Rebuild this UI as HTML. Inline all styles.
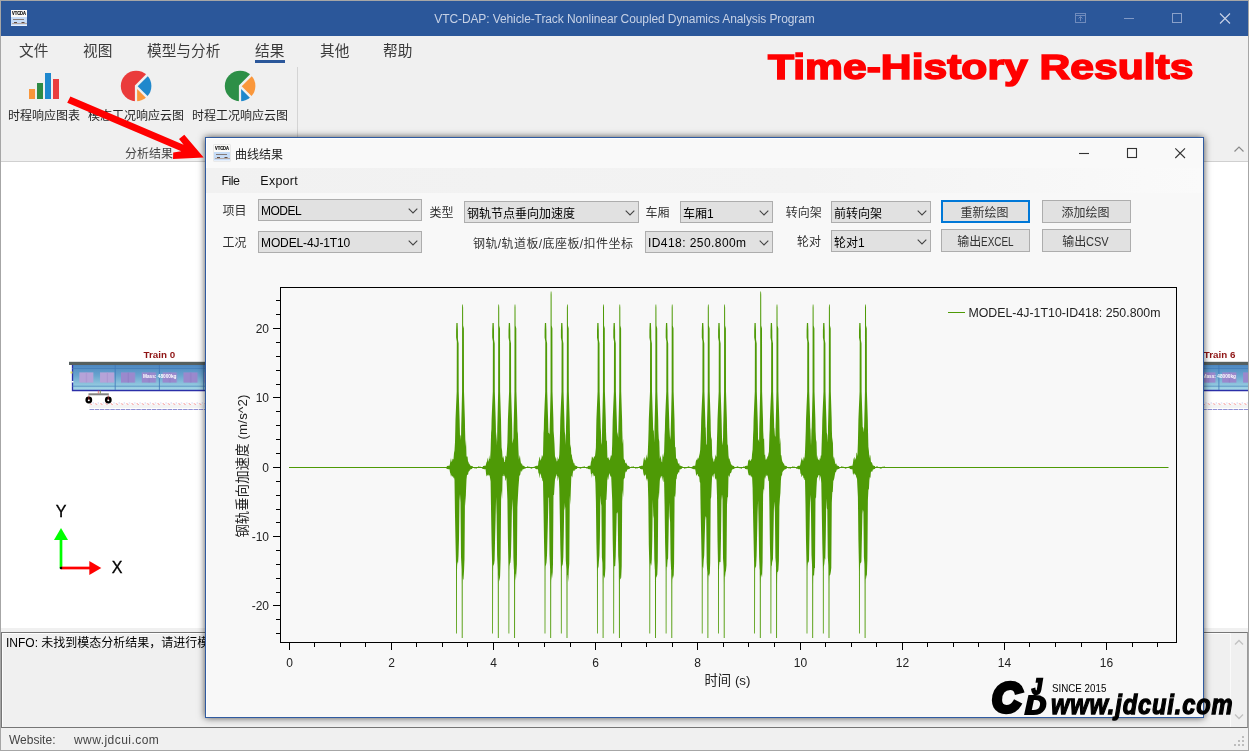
<!DOCTYPE html>
<html lang="zh-CN">
<head>
<meta charset="utf-8">
<title>VTC-DAP: Vehicle-Track Nonlinear Coupled Dynamics Analysis Program</title>
<style>
*{box-sizing:border-box;margin:0;padding:0}
html,body{width:1249px;height:751px;overflow:hidden;background:#f0f0f0}
body{font-family:"Liberation Sans","Noto Sans CJK SC",sans-serif;font-size:12px;color:#222;position:relative}
.abs{position:absolute}
#win{will-change:transform;position:absolute;left:0;top:0;width:1249px;height:751px;border:1px solid #a6a6a6;background:#f0f0f0;overflow:hidden}
#titlebar{position:absolute;left:0;top:0;width:1247px;height:35px;background:#2b579a}
#titletext{position:absolute;left:0;width:1247px;top:10px;text-align:center;color:#c6d1e5;font-size:12px;line-height:16px;letter-spacing:-.1px}
.appicon{position:absolute;width:16px;height:16px;background:#c6dcf7;overflow:hidden}
.appicon .t{position:absolute;left:0;top:0;width:16px;height:7px;background:#fbfaf8}
.appicon .b{position:absolute;left:0;top:14.500px;width:16px;height:1.500px;background:#e6effb}
.appicon span{position:absolute;left:0.900px;top:1.400px;font-size:4.500px;line-height:5px;font-weight:bold;color:#000;white-space:nowrap;transform:scaleX(.9);transform-origin:0 0;-webkit-text-stroke:.15px #000}
.appicon i{position:absolute;left:2px;top:9px;width:11px;height:1px;background:#857b78}
.appicon b{position:absolute;left:2.500px;top:12px;width:3px;height:1.200px;background:#5e4e48;box-shadow:7.500px 0 0 #5e4e48}
.appicon u{position:absolute;left:1px;top:13.200px;width:14.500px;height:.8px;background:#b3a59f}
#menubar{position:absolute;left:0;top:35px;width:1247px;height:30px}
#menubar span{position:absolute;top:5px;font-size:14.67px;line-height:20px;color:#3b3b3b;white-space:nowrap}
#ribbon{position:absolute;left:0;top:65px;width:1247px;height:96px;border-bottom:1px solid #d0d0d0}
.rbtn{position:absolute;top:0;height:62px;text-align:center;font-size:12px;color:#262626;white-space:nowrap}
.rbtn .lbl{position:absolute;left:0;right:0;top:42px;line-height:16px}
#canvas{position:absolute;left:0px;top:161px;width:1247px;height:466px;background:#fff}
#log{position:absolute;left:0px;top:631px;width:1247px;height:96px;border:1px solid #767676;border-right-color:#9a9a9a;background:#f0f0f0;box-shadow:inset 1px 1px 0 #fdfdfd}
#status{position:absolute;left:0;top:727px;width:1247px;height:22px;color:#444;font-size:12px}
#dlg{position:absolute;left:204px;top:136px;width:999px;height:581px;border:1px solid #2f5aa0;background:#f8f8f8;box-shadow:0 0 7px 0 rgba(0,0,0,.68)}
.combo{position:absolute;height:22px;border:1px solid #adadad;background:#e1e1e1;color:#000;font-size:12px;line-height:20px;padding-left:2px;white-space:nowrap}
.combo svg{position:absolute;right:3px;top:8px}
.lab{position:absolute;font-size:12px;line-height:16px;color:#333;white-space:nowrap}
.btn{position:absolute;height:22px;border:1px solid #adadad;background:#e1e1e1;color:#333;font-size:12px;line-height:20px;text-align:center;white-space:nowrap}
.btn.def{border:2px solid #0078d7;line-height:19px}
svg text{font-family:"Liberation Sans","Noto Sans CJK SC",sans-serif}
</style>
</head>
<body>
<div id="win">
  <div id="titlebar">
    <div class="appicon" style="left:10px;top:9px"><div class="t"></div><div class="b"></div><span>VTCDA</span><i></i><b></b><u></u></div>
    <div id="titletext">VTC-DAP: Vehicle-Track Nonlinear Coupled Dynamics Analysis Program</div>
    <svg class="abs" style="left:1060px;top:0" width="187" height="35" viewBox="0 0 187 35" fill="none">
      <g stroke="#6f8bbd" stroke-width="1"><rect x="14.5" y="12.5" width="10" height="9"/><path d="M14.5 14.5h10M19.500 20v-4M17.5 17.5l2-2 2 2"/></g>
      <path d="M63 17.500h10" stroke="#8199c5"/>
      <rect x="111.500" y="12.500" width="9" height="9" stroke="#8aa1ca"/>
      <path d="M159 12.500l10 10M169 12.500l-10 10" stroke="#c9d3e7" stroke-width="1.1"/>
    </svg>
  </div>
  <div id="menubar">
    <span style="left:18px">文件</span><span style="left:82px">视图</span><span style="left:146px">模型与分析</span><span style="left:254px">结果</span><span style="left:319px">其他</span><span style="left:382px">帮助</span>
    <div class="abs" style="left:254px;top:24px;width:30px;height:3px;background:#2b579a"></div>
  </div>
  <div id="ribbon">
    <div class="rbtn" style="left:3px;width:80px">
      <svg class="abs" style="left:24px;top:6px" width="32" height="28" viewBox="0 0 32 28"><rect x="1" y="17" width="6" height="10" fill="#f9963b"/><rect x="9" y="11" width="6" height="16" fill="#2e8b45"/><rect x="17" y="1" width="6" height="26" fill="#1e88ce"/><rect x="25" y="7" width="6" height="20" fill="#ea3e3e"/></svg>
      <div class="lbl">时程响应图表</div>
    </div>
    <div class="rbtn" style="left:87px;width:96px">
      <svg class="abs" style="left:32px;top:4px" width="32" height="32" viewBox="120 70 32 32"><defs><clipPath id="pc1"><circle cx="136.100" cy="86" r="15.300"/></clipPath></defs><g clip-path="url(#pc1)"><path d="M134.900 85.400L164.900 55.400H100V120H134.900Z" fill="#ea3b3b"/><path d="M137.700 86.300L167.700 56.300V116.300Z" fill="#1f88cc"/><path d="M137.100 89V120H168.100Z" fill="#fa973b"/></g></svg>
      <div class="lbl">模态工况响应云图</div>
    </div>
    <div class="rbtn" style="left:191px;width:96px">
      <svg class="abs" style="left:32px;top:4px" width="32" height="32" viewBox="120 70 32 32"><defs><clipPath id="pc2"><circle cx="136.100" cy="86" r="15.300"/></clipPath></defs><g clip-path="url(#pc2)"><path d="M134.900 85.400L164.900 55.400H100V120H134.900Z" fill="#2d8f47"/><path d="M137.700 86.300L167.700 56.300V116.300Z" fill="#fa973b"/><path d="M137.100 89V120H168.100Z" fill="#1f88cc"/></g></svg>
      <div class="lbl">时程工况响应云图</div>
    </div>
    <div class="abs" style="left:296px;top:1px;width:1px;height:93px;background:#d4d4d4"></div>
    <div class="abs" style="left:124px;top:80px;font-size:12px;line-height:16px;color:#444">分析结果</div>
    <svg class="abs" style="left:1232px;top:79px" width="12" height="8" viewBox="0 0 12 8"><path d="M1.500 6.500l4.500-4.500 4.500 4.500" stroke="#8a8a8a" fill="none" stroke-width="1.200"/></svg>
  </div>
  <div id="bigtitle" class="abs" style="left:767px;top:44px;font-size:34.500px;line-height:44px;font-weight:bold;color:#ff0000;white-space:nowrap;transform-origin:0 0;transform:scaleX(1.235);-webkit-text-stroke:1.500px #ff0000">Time-History Results</div>

  <div id="canvas">
    <svg class="abs" style="left:0;top:0" width="1247" height="466" viewBox="1 162 1247 466">
<defs><linearGradient id="tb" x1="0" y1="0" x2="0" y2="1"><stop offset="0" stop-color="#4a84bf"/><stop offset=".45" stop-color="#6aa6cf"/><stop offset="1" stop-color="#a9dbe8"/></linearGradient><pattern id="trk" x="89.500" y="401" width="5.200" height="6" patternUnits="userSpaceOnUse"><path d="M0.500 2.400l1.800 1.200" stroke="#f04a4a" stroke-width="0.800" opacity=".8"/><rect x="3.200" y="1.600" width="0.900" height="0.800" fill="#7a7ad8" opacity=".7"/></pattern><pattern id="win1" x="79.200" y="372" width="20.850" height="11" patternUnits="userSpaceOnUse"><rect x="0" y="0.400" width="14.200" height="10.200" fill="#b5a3d8"/><rect x="6.800" y="0.400" width="0.800" height="10.200" fill="#a792cf"/></pattern><pattern id="win3" x="120.900" y="372" width="20.850" height="11" patternUnits="userSpaceOnUse"><rect x="0" y="0.400" width="14.200" height="10.200" fill="#9a89cd"/><rect x="6.800" y="0.400" width="0.800" height="10.200" fill="#8c7bc3"/></pattern><pattern id="win2" x="1201.300" y="372" width="20.900" height="11" patternUnits="userSpaceOnUse"><rect x="0" y="0.400" width="14.200" height="10.200" fill="#9b88cc"/><rect x="6.800" y="0.400" width="0.800" height="10.200" fill="#8d7ac2"/></pattern></defs>
<rect x="89" y="404.500" width="1159" height="3.500" fill="#f3f3f3"/>
<rect x="89.500" y="401" width="1159" height="6" fill="url(#trk)"/>
<path d="M89.500 409.500H1248" stroke="#6a6ac4" stroke-width="1" stroke-dasharray="4.500 0.700" opacity=".75"/>
<rect x="72" y="364" width="1176" height="26.500" fill="url(#tb)"/>
<path d="M72.500 364V390.500H1248" fill="none" stroke="#2b2fa8" stroke-width="1.300"/>
<path d="M72 368.500H1248M72 386.200H1248" stroke="#3f78b8" stroke-width="0.800" opacity=".8"/>
<path d="M115.200 365V390M159.400 365V390M203.600 365V390M1218.900 365V390" stroke="#3f78b8" stroke-width="0.900" opacity=".9"/>
<rect x="79.200" y="372" width="36" height="11" fill="url(#win1)"/>
<rect x="120.900" y="372" width="90" height="11" fill="url(#win3)"/>
<rect x="1201.300" y="372" width="47" height="11" fill="url(#win2)"/>
<rect x="69" y="361.800" width="1179" height="3.200" fill="#56605f"/>
<rect x="70.500" y="371.500" width="2" height="2" fill="#e8e060"/><rect x="71.500" y="381" width="2" height="1.500" fill="#fff"/>
<rect x="88.500" y="393.300" width="20.300" height="2" fill="#808080"/>
<path d="M98.300 390.500v3M100.300 390.500v3" stroke="#e05050" stroke-width="0.700"/><path d="M100.300 390.500v3" stroke="#50b050" stroke-width="0.700"/>
<circle cx="88.800" cy="400" r="3.400" fill="#000"/><circle cx="108.300" cy="400" r="3.400" fill="#000"/><circle cx="88.800" cy="400.300" r="1" fill="#fff"/><circle cx="108.300" cy="400.300" r="1" fill="#fff"/>
<path d="M88.800 395.500v4.500M108.300 395.500v4.500" stroke="#d03030" stroke-width="0.600"/>
<text x="143.500" y="358" font-size="9.800" font-weight="bold" fill="#8f1414">Train 0</text>
<text x="1203.800" y="358" font-size="9.800" font-weight="bold" fill="#8f1414">Train 6</text>
<text x="143" y="377.900" font-size="5.600" font-weight="bold" fill="#fff" textLength="33.500" lengthAdjust="spacingAndGlyphs">Mass: 48000kg</text>
<text x="1202.500" y="377.900" font-size="5.600" font-weight="bold" fill="#fff" textLength="33.500" lengthAdjust="spacingAndGlyphs">Mass: 48000kg</text>
<path d="M61 568V539" stroke="#00ff00" stroke-width="2.700"/><path d="M61 528L54 540H68Z" fill="#00ff00"/>
<path d="M61 568H90" stroke="#ff0000" stroke-width="2.700"/><path d="M101.300 568L89.300 561V575Z" fill="#ff0000"/>
<circle cx="61" cy="568" r="1.300" fill="#000"/>
<text x="61.200" y="516.600" font-size="16" text-anchor="middle" fill="#000" stroke="#000" stroke-width="0.350">Y</text>
<text x="117.200" y="572.800" font-size="16" text-anchor="middle" fill="#000" stroke="#000" stroke-width="0.350">X</text>
</svg>
  </div>
  <div id="log">
    <div class="abs" style="left:4px;top:2px;font-size:12px;line-height:16px;color:#000;white-space:nowrap">INFO: 未找到模态分析结果，请进行模态分析</div>
    <div class="abs" style="right:0;top:0;width:17px;height:94px;background:#f0f0f0;border-left:1px solid #fafafa">
      <svg class="abs" style="left:3px;top:6px" width="10" height="7" viewBox="0 0 10 7"><path d="M1 5.500l4-4 4 4" stroke="#c2c2c2" fill="none" stroke-width="1.300"/></svg>
      <svg class="abs" style="left:3px;top:80px" width="10" height="7" viewBox="0 0 10 7"><path d="M1 1.500l4 4 4-4" stroke="#c2c2c2" fill="none" stroke-width="1.300"/></svg>
    </div>
  </div>
  <div id="status">
    <span class="abs" style="left:8px;top:4px;line-height:16px">Website:</span>
    <span class="abs" style="left:73px;top:4px;line-height:16px;letter-spacing:.45px">www.jdcui.com</span>
    <svg class="abs" style="left:1231px;top:7px" width="13" height="13" viewBox="0 0 13 13" fill="#bdbdbd"><rect x="10" y="1" width="2" height="2"/><rect x="6" y="5" width="2" height="2"/><rect x="10" y="5" width="2" height="2"/><rect x="2" y="9" width="2" height="2"/><rect x="6" y="9" width="2" height="2"/><rect x="10" y="9" width="2" height="2"/></svg>
  </div>

  <!-- red annotation arrow -->
  <svg class="abs" style="left:0;top:0;z-index:3" width="300" height="200" viewBox="1 1 300 200"><path d="M70.400 96.400L183.600 144.800L179 139L184.300 134.800L203.700 157.600L173 159L173.200 152.600L181.300 151.300L67.200 102.800Z" fill="#ff0000"/></svg>

  <div id="dlg">
    <div class="abs" style="left:0;top:0;width:997px;height:30px;background:#f9f9f9;border-top:1px solid #fff;border-left:1px solid #fff"></div>
<div class="abs" style="left:0;top:30px;width:1px;height:549px;background:#fdfdfd"></div>
<div class="abs" style="left:0;top:30px;width:997px;height:25px;background:linear-gradient(90deg,#f1f1f1 0,#f3f3f3 60%,#fafafa 100%)"></div>
<div class="appicon" style="left:8px;top:7px;box-shadow:0 0 0 .5px #d9d9d9"><div class="t"></div><div class="b"></div><span>VTCDA</span><i></i><b></b><u></u></div>
<div class="abs" style="left:29px;top:8.500px;font-size:12px;line-height:16px;color:#222">曲线结果</div>
<svg class="abs" style="left:860px;top:0" width="137" height="30" viewBox="1066 138 137 30" fill="none" stroke="#333" stroke-width="1.100"><path d="M1079 153.500h10"/><rect x="1127.500" y="148.500" width="9" height="9"/><path d="M1175.300 148.300l9.700 9.700M1185 148.300l-9.700 9.700"/></svg>
<div class="abs" style="left:15.500px;top:35px;font-size:12.500px;line-height:16px;color:#111;letter-spacing:-.6px">File</div>
<div class="abs" style="left:54.300px;top:35px;font-size:12.500px;line-height:16px;color:#111;letter-spacing:.25px">Export</div>
<div class="lab" style="left:16.5px;top:64.8px">项目</div>
<div class="lab" style="left:16.5px;top:97.0px">工况</div>
<div class="lab" style="left:223.5px;top:66.8px">类型</div>
<div class="lab" style="left:439.5px;top:67.0px">车厢</div>
<div class="lab" style="left:579.8px;top:67.0px">转向架</div>
<div class="lab" style="left:591.0px;top:96.0px">轮对</div>
<div class="lab" style="left:267px;top:98px;letter-spacing:.42px">钢轨/轨道板/底座板/扣件坐标</div>
<div class="combo" style="left:52px;top:61px;width:164px;height:22px"><span style="position:relative;top:0.5px;letter-spacing:-0.5px">MODEL</span><svg width="10" height="6" viewBox="0 0 10 6"><path d="M0.700 0.700l4.300 4.300 4.300-4.300" fill="none" stroke="#444" stroke-width="1.100"/></svg></div>
<div class="combo" style="left:52px;top:93px;width:164px;height:22px"><span style="position:relative;top:0.5px;letter-spacing:-0.12px">MODEL-4J-1T10</span><svg width="10" height="6" viewBox="0 0 10 6"><path d="M0.700 0.700l4.300 4.300 4.300-4.300" fill="none" stroke="#444" stroke-width="1.100"/></svg></div>
<div class="combo" style="left:258px;top:63px;width:175px;height:22px"><span style="position:relative;top:1.5px;letter-spacing:0px">钢轨节点垂向加速度</span><svg width="10" height="6" viewBox="0 0 10 6"><path d="M0.700 0.700l4.300 4.300 4.300-4.300" fill="none" stroke="#444" stroke-width="1.100"/></svg></div>
<div class="combo" style="left:474px;top:63px;width:93px;height:22px"><span style="position:relative;top:1.5px;letter-spacing:0px">车厢1</span><svg width="10" height="6" viewBox="0 0 10 6"><path d="M0.700 0.700l4.300 4.300 4.300-4.300" fill="none" stroke="#444" stroke-width="1.100"/></svg></div>
<div class="combo" style="left:439px;top:93px;width:128px;height:22px"><span style="position:relative;top:0.5px;letter-spacing:0.43px">ID418: 250.800m</span><svg width="10" height="6" viewBox="0 0 10 6"><path d="M0.700 0.700l4.300 4.300 4.300-4.300" fill="none" stroke="#444" stroke-width="1.100"/></svg></div>
<div class="combo" style="left:625px;top:63px;width:100px;height:22px"><span style="position:relative;top:1.5px;letter-spacing:0px">前转向架</span><svg width="10" height="6" viewBox="0 0 10 6"><path d="M0.700 0.700l4.300 4.300 4.300-4.300" fill="none" stroke="#444" stroke-width="1.100"/></svg></div>
<div class="combo" style="left:625px;top:92px;width:100px;height:22px"><span style="position:relative;top:1.5px;letter-spacing:0px">轮对1</span><svg width="10" height="6" viewBox="0 0 10 6"><path d="M0.700 0.700l4.300 4.300 4.300-4.300" fill="none" stroke="#444" stroke-width="1.100"/></svg></div>
<div class="btn def" style="left:735px;top:62px;width:89px;height:23px"><span style="position:relative;top:2px"><span style="position:relative;left:-1px">重新绘图</span></span></div>
<div class="btn " style="left:735px;top:91px;width:89px;height:23px"><span style="position:relative;top:2px">输出<span style="display:inline-block;transform:scaleX(.83);transform-origin:0 50%;margin-right:-6.700px">EXCEL</span></span></div>
<div class="btn " style="left:836px;top:62px;width:89px;height:23px"><span style="position:relative;top:2px"><span style="position:relative;left:-1px">添加绘图</span></span></div>
<div class="btn " style="left:836px;top:91px;width:89px;height:23px"><span style="position:relative;top:2px"><span style="position:relative;left:-1px">输出</span><span style="display:inline-block;transform:scaleX(.92);transform-origin:0 50%;margin-right:-2px;left:-1px;position:relative">CSV</span></span></div>
<svg class="abs" style="left:0;top:0" width="997" height="579" viewBox="206 138 997 579">
<path d="M446.5 467.2 447 465.9 447.5 465.9 448 465.8 448.5 465.8 449 465.7 449.5 465.7 450 463.5 450.5 460.5 451 458.1 451.5 461.7 452 461.5 452.5 458.4 453 459.5 453.5 458.9 454 452.9 454.5 450.6 455 441.9 455.3 429.2 455.5 419.5 456 407.5 456.7 391.5 456.8 341.5 456.1 337.5 456.1 330.5 456.4 323 457.6 323 457.9 330.5 457.95 339.5 458.6 343.5 458.7 391.5 459.2 407.5 459.6 419.5 459.8 427.7 460 436.2 460.5 434.5 461 440.3 461.2 427 461.4 419.5 461.7 407.5 462.05 391.5 462.1 307.5 462.3 304.5 462.9 304.5 463.1 307.5 463.15 325.5 463.9 328.5 464 391.5 464.5 407.5 464.9 419.5 465.1 431.1 465.5 446.7 466 439.2 466.5 455.7 467 457.2 467.5 455.9 468 461.2 468.5 461.9 469 464.1 469.5 463.4 470 465.5 470.5 465.6 471 465.8 471.5 465.9 472 466 472.5 467.2 473 467.5 473.5 467.5 474 467.5 474.5 467.5 475 467.5 475.5 467.5 476 467.5 476.5 467.5 477 467.5 477.5 467.5 478 467.5 478 467.5 477.5 467.5 477 467.5 476.5 467.5 476 467.5 475.5 467.5 475 467.5 474.5 467.5 474 467.5 473.5 467.5 473 467.5 472.5 467.8 472 469 471.5 469.1 471 469.2 470.5 469.4 470 469.5 469.5 471 469 471.2 468.5 472 468 475 467.5 474.4 467 474.9 466.5 479.5 466 490.9 465.5 505.9 465 495.6 464.5 558.9 464 571.5 463.5 579.3 463 579.8 462.8 574.8 462.7 584.5 462.65 638 461.75 638 461.7 584.5 461.6 569.2 461.5 567.1 461 557.1 460.5 502.8 460 494.1 459.5 500.8 459 538.7 458.5 555.8 458 564.1 457.5 561.2 457.1 566.3 457 571.5 456.9 633.5 456.1 633.5 456.05 571.5 456 564.5 455.5 541.2 455 515.4 454.5 479.9 454 477.3 453.5 478.4 453 475.9 452.5 476.4 452 476.7 451.5 474.4 451 476.8 450.5 473.8 450 472.6 449.5 469.3 449 469.3 448.5 469.2 448 469.2 447.5 469.1 447 469.1 446.5 467.8ZM482.6 467.2 483.1 465.9 483.6 465.9 484.1 465.8 484.6 465.8 485.1 465.7 485.6 465.7 486.1 463.7 486.6 461.9 487.1 461.3 487.6 457.5 488.1 459.9 488.6 462 489.1 455 489.6 458.5 490.1 459.2 490.6 450.8 491.1 432.8 491.4 429.2 491.6 419.5 492.1 407.5 492.8 391.5 492.9 341.5 492.2 337.5 492.2 330.5 492.5 323 493.7 323 494 330.5 494.05 339.5 494.7 343.5 494.8 391.5 495.3 407.5 495.7 419.5 495.9 427.7 496.1 445.6 496.6 431.8 497.1 441.9 497.3 427 497.5 419.5 497.8 407.5 498.15 391.5 498.2 307.5 498.4 304.5 499 304.5 499.2 307.5 499.25 325.5 500 328.5 500.1 391.5 500.6 407.5 501 419.5 501.2 431.1 501.6 447.5 502.1 450.7 502.6 458.2 503.1 455.9 503.6 457.8 504.1 460 504.6 464 505.1 463.8 505.6 464.1 506.1 465.5 506.6 465.6 507.1 465.8 507.6 465.9 508.1 466 508.6 467.2 509.1 467.5 509.6 467.5 510.1 467.5 510.6 467.5 511.1 467.5 511.6 467.5 512.1 467.5 512.6 467.5 513.1 467.5 513.6 467.5 514.1 467.5 514.1 467.5 513.6 467.5 513.1 467.5 512.6 467.5 512.1 467.5 511.6 467.5 511.1 467.5 510.6 467.5 510.1 467.5 509.6 467.5 509.1 467.5 508.6 467.8 508.1 469 507.6 469.1 507.1 469.2 506.6 469.4 506.1 469.5 505.6 470.6 505.1 472 504.6 472.8 504.1 472 503.6 476.3 503.1 476.1 502.6 475.8 502.1 499 501.6 490.7 501.1 500.1 500.6 559 500.1 575.9 499.6 581.5 499.1 578.5 498.9 574.8 498.8 584.5 498.75 638 497.85 638 497.8 584.5 497.7 569.2 497.6 566.9 497.1 555.3 496.6 514.4 496.1 496.9 495.6 518.8 495.1 537.9 494.6 560.2 494.1 564 493.6 565 493.2 566.3 493.1 571.5 493 633.5 492.2 633.5 492.15 571.5 492.1 564.5 491.6 543.5 491.1 514.2 490.6 481.6 490.1 478.2 489.6 475.6 489.1 475.3 488.6 475.8 488.1 474.3 487.6 475.4 487.1 475.4 486.6 476.4 486.1 474.2 485.6 469.3 485.1 469.3 484.6 469.2 484.1 469.2 483.6 469.1 483.1 469.1 482.6 467.8ZM498.9 467.2 499.4 465.9 499.9 465.9 500.4 465.8 500.9 465.8 501.4 465.7 501.9 465.7 502.4 462.3 502.9 462.4 503.4 458.1 503.9 460.6 504.4 462 504.9 462 505.4 456.2 505.9 455.4 506.4 457.3 506.9 450.4 507.4 442.2 507.7 429.2 507.9 419.5 508.4 407.5 509.1 391.5 509.2 341.5 508.5 337.5 508.5 330.5 508.8 323 510 323 510.3 330.5 510.35 339.5 511 343.5 511.1 391.5 511.6 407.5 512 419.5 512.2 427.7 512.4 443.6 512.9 441 513.4 437.9 513.6 427 513.8 419.5 514.1 407.5 514.45 391.5 514.5 307.5 514.7 304.5 515.3 304.5 515.5 307.5 515.55 325.5 516.3 328.5 516.4 391.5 516.9 407.5 517.3 419.5 517.5 431.1 517.9 433.7 518.4 449.3 518.9 459.6 519.4 456.9 519.9 455 520.4 459.8 520.9 462.7 521.4 464.5 521.9 462.7 522.4 465.5 522.9 465.6 523.4 465.8 523.9 465.9 524.4 466 524.9 467.2 525.4 467.5 525.9 467.5 526.4 467.5 526.9 467.5 527.4 467.5 527.9 467.5 528.4 467.5 528.9 467.5 529.4 467.5 529.9 467.5 530.4 467.5 530.4 467.5 529.9 467.5 529.4 467.5 528.9 467.5 528.4 467.5 527.9 467.5 527.4 467.5 526.9 467.5 526.4 467.5 525.9 467.5 525.4 467.5 524.9 467.8 524.4 469 523.9 469.1 523.4 469.2 522.9 469.4 522.4 469.5 521.9 472.2 521.4 470.8 520.9 470.5 520.4 473.8 519.9 476.1 519.4 475.1 518.9 481.4 518.4 487.9 517.9 497.2 517.4 507.1 516.9 564 516.4 572.3 515.9 580.4 515.4 573.2 515.2 574.8 515.1 584.5 515.05 638 514.15 638 514.1 584.5 514 569.2 513.9 569.8 513.4 557.2 512.9 514.3 512.4 499 511.9 510.5 511.4 536.7 510.9 556.6 510.4 562.5 509.9 563.5 509.5 566.3 509.4 571.5 509.3 633.5 508.5 633.5 508.45 571.5 508.4 564.5 507.9 539 507.4 499.9 506.9 487.3 506.4 477.2 505.9 480.5 505.4 480.5 504.9 475.7 504.4 476.7 503.9 473.4 503.4 476.1 502.9 472.9 502.4 473.3 501.9 469.3 501.4 469.3 500.9 469.2 500.4 469.2 499.9 469.1 499.4 469.1 498.9 467.8ZM535 467.2 535.5 465.9 536 465.9 536.5 465.8 537 465.8 537.5 465.7 538 465.7 538.5 461.4 539 459.9 539.5 456.5 540 457.9 540.5 460.7 541 459.6 541.5 457.7 542 454.6 542.5 456.9 543 455.2 543.5 433.1 543.8 429.2 544 419.5 544.5 407.5 545.2 391.5 545.3 341.5 544.6 337.5 544.6 330.5 544.9 323 546.1 323 546.4 330.5 546.45 339.5 547.1 343.5 547.2 391.5 547.7 407.5 548.1 419.5 548.3 427.7 548.5 432.7 549 433 549.5 434.6 549.7 427 549.9 419.5 550.2 407.5 550.55 391.5 550.6 294.5 550.8 291.5 551.4 291.5 551.6 294.5 551.65 325.5 552.4 328.5 552.5 391.5 553 407.5 553.4 419.5 553.6 431.1 554 435.9 554.5 444.3 555 456.4 555.5 460.1 556 457.5 556.5 460.2 557 462.6 557.5 462.6 558 463.5 558.5 465.5 559 465.6 559.5 465.8 560 465.9 560.5 466 561 467.2 561.5 467.5 562 467.5 562.5 467.5 563 467.5 563.5 467.5 564 467.5 564.5 467.5 565 467.5 565.5 467.5 566 467.5 566.5 467.5 566.5 467.5 566 467.5 565.5 467.5 565 467.5 564.5 467.5 564 467.5 563.5 467.5 563 467.5 562.5 467.5 562 467.5 561.5 467.5 561 467.8 560.5 469 560 469.1 559.5 469.2 559 469.4 558.5 469.5 558 471.3 557.5 472.3 557 472.8 556.5 472.7 556 475.9 555.5 478 555 479.6 554.5 487.1 554 495.3 553.5 494.7 553 563.8 552.5 578.4 552 572.2 551.5 580.6 551.3 574.8 551.2 584.5 551.15 638 550.25 638 550.2 584.5 550.1 569.2 550 567 549.5 554.6 549 497.7 548.5 497.4 548 517.1 547.5 536 547 555.2 546.5 562.5 546 564.9 545.6 566.3 545.5 571.5 545.4 633.5 544.6 633.5 544.55 571.5 544.5 564.5 544 541.1 543.5 508.7 543 480.5 542.5 481.4 542 478.2 541.5 478.1 541 475.2 540.5 473.3 540 475.1 539.5 478.4 539 472.8 538.5 473.9 538 469.3 537.5 469.3 537 469.2 536.5 469.2 536 469.1 535.5 469.1 535 467.8ZM551.3 467.2 551.8 465.9 552.3 465.9 552.8 465.8 553.3 465.8 553.8 465.7 554.3 465.7 554.8 462.6 555.3 459.5 555.8 456.1 556.3 461.4 556.8 461.4 557.3 460.9 557.8 456.5 558.3 459.3 558.8 459.3 559.3 454.5 559.8 441.6 560.1 429.2 560.3 419.5 560.8 407.5 561.5 391.5 561.6 341.5 560.9 337.5 560.9 330.5 561.2 323 562.4 323 562.7 330.5 562.75 339.5 563.4 343.5 563.5 391.5 564 407.5 564.4 419.5 564.6 427.7 564.8 431.7 565.3 435.5 565.8 445.1 566 427 566.2 419.5 566.5 407.5 566.85 391.5 566.9 307.5 567.1 304.5 567.7 304.5 567.9 307.5 567.95 325.5 568.7 328.5 568.8 391.5 569.3 407.5 569.7 419.5 569.9 431.1 570.3 448.3 570.8 444.2 571.3 454.3 571.8 454.7 572.3 458.6 572.8 459.9 573.3 462 573.8 463.6 574.3 462.9 574.8 465.5 575.3 465.6 575.8 465.8 576.3 465.9 576.8 466 577.3 467.2 577.8 467.5 578.3 467.5 578.8 467.5 579.3 467.5 579.8 467.5 580.3 467.5 580.8 467.5 581.3 467.5 581.8 467.5 582.3 467.5 582.8 467.5 582.8 467.5 582.3 467.5 581.8 467.5 581.3 467.5 580.8 467.5 580.3 467.5 579.8 467.5 579.3 467.5 578.8 467.5 578.3 467.5 577.8 467.5 577.3 467.8 576.8 469 576.3 469.1 575.8 469.2 575.3 469.4 574.8 469.5 574.3 471.2 573.8 470.4 573.3 470.8 572.8 473.2 572.3 477.8 571.8 475.6 571.3 477.1 570.8 491.3 570.3 504.9 569.8 495.6 569.3 563.4 568.8 569.6 568.3 582.3 567.8 574.9 567.6 574.8 567.5 584.5 567.45 638 566.55 638 566.5 584.5 566.4 569.2 566.3 567.5 565.8 560.2 565.3 506.2 564.8 510.3 564.3 502.7 563.8 533.8 563.3 557.3 562.8 564.1 562.3 565.5 561.9 566.3 561.8 571.5 561.7 633.5 560.9 633.5 560.85 571.5 560.8 564.5 560.3 545.2 559.8 514.8 559.3 488.5 558.8 476.2 558.3 478.3 557.8 481.2 557.3 476.1 556.8 476 556.3 473.6 555.8 476.7 555.3 473 554.8 472.2 554.3 469.3 553.8 469.3 553.3 469.2 552.8 469.2 552.3 469.1 551.8 469.1 551.3 467.8ZM587.4 467.2 587.9 465.9 588.4 465.9 588.9 465.8 589.4 465.8 589.9 465.7 590.4 465.7 590.9 462.1 591.4 460.4 591.9 456.5 592.4 457.1 592.9 457.7 593.4 459 593.9 456.8 594.4 456.2 594.9 456.8 595.4 452.8 595.9 447.6 596.2 429.2 596.4 419.5 596.9 407.5 597.6 391.5 597.7 341.5 597 337.5 597 330.5 597.3 323 598.5 323 598.8 330.5 598.85 339.5 599.5 343.5 599.6 391.5 600.1 407.5 600.5 419.5 600.7 427.7 600.9 430.6 601.4 442.3 601.9 445.1 602.1 427 602.3 419.5 602.6 407.5 602.95 391.5 603 307.5 603.2 304.5 603.8 304.5 604 307.5 604.05 325.5 604.8 328.5 604.9 391.5 605.4 407.5 605.8 419.5 606 431.1 606.4 441.2 606.9 440.2 607.4 457.2 607.9 458.2 608.4 456.8 608.9 462.7 609.4 464.5 609.9 463.1 610.4 463.4 610.9 465.5 611.4 465.6 611.9 465.8 612.4 465.9 612.9 466 613.4 467.2 613.9 467.5 614.4 467.5 614.9 467.5 615.4 467.5 615.9 467.5 616.4 467.5 616.9 467.5 617.4 467.5 617.9 467.5 618.4 467.5 618.9 467.5 618.9 467.5 618.4 467.5 617.9 467.5 617.4 467.5 616.9 467.5 616.4 467.5 615.9 467.5 615.4 467.5 614.9 467.5 614.4 467.5 613.9 467.5 613.4 467.8 612.9 469 612.4 469.1 611.9 469.2 611.4 469.4 610.9 469.5 610.4 470.6 609.9 472.7 609.4 472.7 608.9 475.3 608.4 478.7 607.9 480.2 607.4 476.3 606.9 490.6 606.4 499.7 605.9 500 605.4 567.9 604.9 575.8 604.4 578.5 603.9 576 603.7 574.8 603.6 584.5 603.55 638 602.65 638 602.6 584.5 602.5 569.2 602.4 562.9 601.9 557.5 601.4 506 600.9 502.4 600.4 495.4 599.9 536.5 599.4 555.6 598.9 561.2 598.4 568.4 598 566.3 597.9 571.5 597.8 633.5 597 633.5 596.95 571.5 596.9 564.5 596.4 542.2 595.9 502 595.4 483 594.9 476.2 594.4 475.6 593.9 476.5 593.4 475.1 592.9 472.9 592.4 473.3 591.9 477.9 591.4 474.1 590.9 473.8 590.4 469.3 589.9 469.3 589.4 469.2 588.9 469.2 588.4 469.1 587.9 469.1 587.4 467.8ZM603.7 467.2 604.2 465.9 604.7 465.9 605.2 465.8 605.7 465.8 606.2 465.7 606.7 465.7 607.2 463.9 607.7 461.8 608.2 459.2 608.7 458.3 609.2 460.1 609.7 460.2 610.2 454.8 610.7 459.3 611.2 454.8 611.7 456.2 612.2 444 612.5 429.2 612.7 419.5 613.2 407.5 613.9 391.5 614 341.5 613.3 337.5 613.3 330.5 613.6 323 614.8 323 615.1 330.5 615.15 339.5 615.8 343.5 615.9 391.5 616.4 407.5 616.8 419.5 617 427.7 617.2 432.1 617.7 434.1 618.2 437.7 618.4 427 618.6 419.5 618.9 407.5 619.25 391.5 619.3 307.5 619.5 304.5 620.1 304.5 620.3 307.5 620.35 325.5 621.1 328.5 621.2 391.5 621.7 407.5 622.1 419.5 622.3 431.1 622.7 444.1 623.2 438.6 623.7 458.3 624.2 460.3 624.7 459.3 625.2 463.2 625.7 462.4 626.2 464.3 626.7 462.3 627.2 465.5 627.7 465.6 628.2 465.8 628.7 465.9 629.2 466 629.7 467.2 630.2 467.5 630.7 467.5 631.2 467.5 631.7 467.5 632.2 467.5 632.7 467.5 633.2 467.5 633.7 467.5 634.2 467.5 634.7 467.5 635.2 467.5 635.2 467.5 634.7 467.5 634.2 467.5 633.7 467.5 633.2 467.5 632.7 467.5 632.2 467.5 631.7 467.5 631.2 467.5 630.7 467.5 630.2 467.5 629.7 467.8 629.2 469 628.7 469.1 628.2 469.2 627.7 469.4 627.2 469.5 626.7 471.5 626.2 471.8 625.7 471.4 625.2 473.2 624.7 478.3 624.2 478.2 623.7 479.5 623.2 497.4 622.7 490.1 622.2 501.5 621.7 566.2 621.2 577.4 620.7 579.4 620.2 578.2 620 574.8 619.9 584.5 619.85 638 618.95 638 618.9 584.5 618.8 569.2 618.7 564.2 618.2 555.6 617.7 514.1 617.2 512 616.7 513.4 616.2 535.1 615.7 556.6 615.2 566.1 614.7 566.3 614.3 566.3 614.2 571.5 614.1 633.5 613.3 633.5 613.25 571.5 613.2 564.5 612.7 540 612.2 500.6 611.7 488.6 611.2 476.9 610.7 475.3 610.2 477.6 609.7 472.9 609.2 474.6 608.7 474.8 608.2 476.8 607.7 473.6 607.2 471.7 606.7 469.3 606.2 469.3 605.7 469.2 605.2 469.2 604.7 469.1 604.2 469.1 603.7 467.8ZM639.8 467.2 640.3 465.9 640.8 465.9 641.3 465.8 641.8 465.8 642.3 465.7 642.8 465.7 643.3 461.7 643.8 458.6 644.3 456.8 644.8 459.8 645.3 460.4 645.8 458.4 646.3 457.3 646.8 454.3 647.3 459 647.8 452.2 648.3 439.4 648.6 429.2 648.8 419.5 649.3 407.5 650 391.5 650.1 341.5 649.4 337.5 649.4 330.5 649.7 323 650.9 323 651.2 330.5 651.25 339.5 651.9 343.5 652 391.5 652.5 407.5 652.9 419.5 653.1 427.7 653.3 430.4 653.8 430.5 654.3 442.7 654.5 427 654.7 419.5 655 407.5 655.35 391.5 655.4 307.5 655.6 304.5 656.2 304.5 656.4 307.5 656.45 325.5 657.2 328.5 657.3 391.5 657.8 407.5 658.2 419.5 658.4 431.1 658.8 438.7 659.3 441.6 659.8 459.1 660.3 455.2 660.8 457.5 661.3 459.6 661.8 464 662.3 463.3 662.8 463.9 663.3 465.5 663.8 465.6 664.3 465.8 664.8 465.9 665.3 466 665.8 467.2 666.3 467.5 666.8 467.5 667.3 467.5 667.8 467.5 668.3 467.5 668.8 467.5 669.3 467.5 669.8 467.5 670.3 467.5 670.8 467.5 671.3 467.5 671.3 467.5 670.8 467.5 670.3 467.5 669.8 467.5 669.3 467.5 668.8 467.5 668.3 467.5 667.8 467.5 667.3 467.5 666.8 467.5 666.3 467.5 665.8 467.8 665.3 469 664.8 469.1 664.3 469.2 663.8 469.4 663.3 469.5 662.8 470.6 662.3 472.9 661.8 472.9 661.3 475.5 660.8 479.1 660.3 476.2 659.8 480.9 659.3 491.1 658.8 500.1 658.3 492.5 657.8 560.9 657.3 574.6 656.8 576.6 656.3 577.8 656.1 574.8 656 584.5 655.95 638 655.05 638 655 584.5 654.9 569.2 654.8 569.5 654.3 559.1 653.8 518.4 653.3 515.5 652.8 499.5 652.3 539.2 651.8 559.4 651.3 566 650.8 562.8 650.4 566.3 650.3 571.5 650.2 633.5 649.4 633.5 649.35 571.5 649.3 564.5 648.8 545.1 648.3 500 647.8 481.8 647.3 478.7 646.8 478.4 646.3 481.1 645.8 474.1 645.3 475.3 644.8 474.9 644.3 476.4 643.8 475 643.3 473.1 642.8 469.3 642.3 469.3 641.8 469.2 641.3 469.2 640.8 469.1 640.3 469.1 639.8 467.8ZM656.1 467.2 656.6 465.9 657.1 465.9 657.6 465.8 658.1 465.8 658.6 465.7 659.1 465.7 659.6 463.4 660.1 461.7 660.6 459.5 661.1 461.2 661.6 461.5 662.1 462.5 662.6 453.6 663.1 457.3 663.6 455.2 664.1 452.2 664.6 435.4 664.9 429.2 665.1 419.5 665.6 407.5 666.3 391.5 666.4 341.5 665.7 337.5 665.7 330.5 666 323 667.2 323 667.5 330.5 667.55 339.5 668.2 343.5 668.3 391.5 668.8 407.5 669.2 419.5 669.4 427.7 669.6 430.4 670.1 439.7 670.6 435.1 670.8 427 671 419.5 671.3 407.5 671.65 391.5 671.7 307.5 671.9 304.5 672.5 304.5 672.7 307.5 672.75 325.5 673.5 328.5 673.6 391.5 674.1 407.5 674.5 419.5 674.7 431.1 675.1 447.4 675.6 446.7 676.1 458.7 676.6 458.5 677.1 458.9 677.6 461.1 678.1 463.6 678.6 463.8 679.1 462.7 679.6 465.5 680.1 465.6 680.6 465.8 681.1 465.9 681.6 466 682.1 467.2 682.6 467.5 683.1 467.5 683.6 467.5 684.1 467.5 684.6 467.5 685.1 467.5 685.6 467.5 686.1 467.5 686.6 467.5 687.1 467.5 687.6 467.5 687.6 467.5 687.1 467.5 686.6 467.5 686.1 467.5 685.6 467.5 685.1 467.5 684.6 467.5 684.1 467.5 683.6 467.5 683.1 467.5 682.6 467.5 682.1 467.8 681.6 469 681.1 469.1 680.6 469.2 680.1 469.4 679.6 469.5 679.1 472.7 678.6 472.1 678.1 472.9 677.6 474.2 677.1 474.4 676.6 478.8 676.1 479.5 675.6 492.9 675.1 497.4 674.6 495.6 674.1 563 673.6 578.2 673.1 575.3 672.6 579.8 672.4 574.8 672.3 584.5 672.25 638 671.35 638 671.3 584.5 671.2 569.2 671.1 570.3 670.6 559.2 670.1 522 669.6 516.4 669.1 502.6 668.6 532.8 668.1 558.3 667.6 560.1 667.1 567.5 666.7 566.3 666.6 571.5 666.5 633.5 665.7 633.5 665.65 571.5 665.6 564.5 665.1 543 664.6 506.4 664.1 481.6 663.6 481.9 663.1 476.7 662.6 481.5 662.1 475.7 661.6 475.9 661.1 477.7 660.6 473.9 660.1 472.3 659.6 471.1 659.1 469.3 658.6 469.3 658.1 469.2 657.6 469.2 657.1 469.1 656.6 469.1 656.1 467.8ZM692.2 467.2 692.7 465.9 693.2 465.9 693.7 465.8 694.2 465.8 694.7 465.7 695.2 465.7 695.7 462.3 696.2 459.2 696.7 460.7 697.2 457.2 697.7 460.1 698.2 458.6 698.7 457.8 699.2 455.5 699.7 453.6 700.2 449.7 700.7 437.6 701 429.2 701.2 419.5 701.7 407.5 702.4 391.5 702.5 341.5 701.8 337.5 701.8 330.5 702.1 323 703.3 323 703.6 330.5 703.65 339.5 704.3 343.5 704.4 391.5 704.9 407.5 705.3 419.5 705.5 427.7 705.7 427.2 706.2 445.3 706.7 443.7 706.9 427 707.1 419.5 707.4 407.5 707.75 391.5 707.8 307.5 708 304.5 708.6 304.5 708.8 307.5 708.85 325.5 709.6 328.5 709.7 391.5 710.2 407.5 710.6 419.5 710.8 431.1 711.2 439.8 711.7 436.7 712.2 455.6 712.7 458.5 713.2 460.2 713.7 461.6 714.2 463.2 714.7 463.4 715.2 463.2 715.7 465.5 716.2 465.6 716.7 465.8 717.2 465.9 717.7 466 718.2 467.2 718.7 467.5 719.2 467.5 719.7 467.5 720.2 467.5 720.7 467.5 721.2 467.5 721.7 467.5 722.2 467.5 722.7 467.5 723.2 467.5 723.7 467.5 723.7 467.5 723.2 467.5 722.7 467.5 722.2 467.5 721.7 467.5 721.2 467.5 720.7 467.5 720.2 467.5 719.7 467.5 719.2 467.5 718.7 467.5 718.2 467.8 717.7 469 717.2 469.1 716.7 469.2 716.2 469.4 715.7 469.5 715.2 472.6 714.7 472.5 714.2 473 713.7 474.6 713.2 477.8 712.7 476.2 712.2 475 711.7 484.5 711.2 496.9 710.7 499 710.2 562.5 709.7 576.9 709.2 573.3 708.7 576 708.5 574.8 708.4 584.5 708.35 638 707.45 638 707.4 584.5 707.3 569.2 707.2 572.3 706.7 562.3 706.2 517.8 705.7 515.9 705.2 520.3 704.7 537.6 704.2 555.6 703.7 560 703.2 568.4 702.8 566.3 702.7 571.5 702.6 633.5 701.8 633.5 701.75 571.5 701.7 564.5 701.2 538.3 700.7 514.1 700.2 482.7 699.7 481.9 699.2 477.1 698.7 476.1 698.2 476.7 697.7 474.5 697.2 473.7 696.7 475.1 696.2 476.1 695.7 471.9 695.2 469.3 694.7 469.3 694.2 469.2 693.7 469.2 693.2 469.1 692.7 469.1 692.2 467.8ZM708.5 467.2 709 465.9 709.5 465.9 710 465.8 710.5 465.8 711 465.7 711.5 465.7 712 461.9 712.5 459.5 713 458.2 713.5 461.4 714 461.9 714.5 459.1 715 458.6 715.5 454.3 716 456.4 716.5 456.6 717 438.6 717.3 429.2 717.5 419.5 718 407.5 718.7 391.5 718.8 341.5 718.1 337.5 718.1 330.5 718.4 323 719.6 323 719.9 330.5 719.95 339.5 720.6 343.5 720.7 391.5 721.2 407.5 721.6 419.5 721.8 427.7 722 437.5 722.5 445.5 723 440.5 723.2 427 723.4 419.5 723.7 407.5 724.05 391.5 724.1 307.5 724.3 304.5 724.9 304.5 725.1 307.5 725.15 325.5 725.9 328.5 726 391.5 726.5 407.5 726.9 419.5 727.1 431.1 727.5 443.9 728 445.8 728.5 455.4 729 459.4 729.5 458.1 730 461 730.5 462 731 464.3 731.5 464.6 732 465.5 732.5 465.6 733 465.8 733.5 465.9 734 466 734.5 467.2 735 467.5 735.5 467.5 736 467.5 736.5 467.5 737 467.5 737.5 467.5 738 467.5 738.5 467.5 739 467.5 739.5 467.5 740 467.5 740 467.5 739.5 467.5 739 467.5 738.5 467.5 738 467.5 737.5 467.5 737 467.5 736.5 467.5 736 467.5 735.5 467.5 735 467.5 734.5 467.8 734 469 733.5 469.1 733 469.2 732.5 469.4 732 469.5 731.5 471.7 731 472.9 730.5 473.1 730 473.9 729.5 477.6 729 475.8 728.5 475.6 728 497.5 727.5 497.1 727 504.8 726.5 565.3 726 570.6 725.5 572.6 725 577.4 724.8 574.8 724.7 584.5 724.65 638 723.75 638 723.7 584.5 723.6 569.2 723.5 566.1 723 557.9 722.5 499.2 722 494.2 721.5 500.5 721 537.4 720.5 561.9 720 562.3 719.5 561.4 719.1 566.3 719 571.5 718.9 633.5 718.1 633.5 718.05 571.5 718 564.5 717.5 539.9 717 496.2 716.5 480.8 716 477.9 715.5 479.7 715 478.3 714.5 473.5 714 473.8 713.5 473.6 713 474.4 712.5 473.3 712 471.7 711.5 469.3 711 469.3 710.5 469.2 710 469.2 709.5 469.1 709 469.1 708.5 467.8ZM744.6 467.2 745.1 465.9 745.6 465.9 746.1 465.8 746.6 465.8 747.1 465.7 747.6 465.7 748.1 461.5 748.6 459.7 749.1 460.7 749.6 458.7 750.1 460.7 750.6 460.9 751.1 458.9 751.6 459.8 752.1 453.6 752.6 449.6 753.1 435.3 753.4 429.2 753.6 419.5 754.1 407.5 754.8 391.5 754.9 341.5 754.2 337.5 754.2 330.5 754.5 323 755.7 323 756 330.5 756.05 339.5 756.7 343.5 756.8 391.5 757.3 407.5 757.7 419.5 757.9 427.7 758.1 440.5 758.6 439.1 759.1 442.2 759.3 427 759.5 419.5 759.8 407.5 760.15 391.5 760.2 294.5 760.4 291.5 761 291.5 761.2 294.5 761.25 325.5 762 328.5 762.1 391.5 762.6 407.5 763 419.5 763.2 431.1 763.6 438.9 764.1 438.4 764.6 454.9 765.1 454.5 765.6 459.3 766.1 460.6 766.6 464.2 767.1 463.3 767.6 464.5 768.1 465.5 768.6 465.6 769.1 465.8 769.6 465.9 770.1 466 770.6 467.2 771.1 467.5 771.6 467.5 772.1 467.5 772.6 467.5 773.1 467.5 773.6 467.5 774.1 467.5 774.6 467.5 775.1 467.5 775.6 467.5 776.1 467.5 776.1 467.5 775.6 467.5 775.1 467.5 774.6 467.5 774.1 467.5 773.6 467.5 773.1 467.5 772.6 467.5 772.1 467.5 771.6 467.5 771.1 467.5 770.6 467.8 770.1 469 769.6 469.1 769.1 469.2 768.6 469.4 768.1 469.5 767.6 470.9 767.1 470.4 766.6 472.7 766.1 472.7 765.6 479.3 765.1 476.2 764.6 479.1 764.1 490.8 763.6 488.6 763.1 494.5 762.6 561.9 762.1 577 761.6 574 761.1 577.7 760.9 574.8 760.8 584.5 760.75 638 759.85 638 759.8 584.5 759.7 569.2 759.6 569.7 759.1 557.3 758.6 523.3 758.1 500.5 757.6 512.9 757.1 534.4 756.6 555.9 756.1 566.1 755.6 568.2 755.2 566.3 755.1 571.5 755 633.5 754.2 633.5 754.15 571.5 754.1 564.5 753.6 540.8 753.1 517.2 752.6 487.9 752.1 477.3 751.6 476 751.1 477.8 750.6 474.6 750.1 476.3 749.6 475 749.1 475.5 748.6 474.7 748.1 472.8 747.6 469.3 747.1 469.3 746.6 469.2 746.1 469.2 745.6 469.1 745.1 469.1 744.6 467.8ZM760.9 467.2 761.4 465.9 761.9 465.9 762.4 465.8 762.9 465.8 763.4 465.7 763.9 465.7 764.4 463.4 764.9 460.7 765.4 459.5 765.9 459.8 766.4 458.1 766.9 459.9 767.4 455.9 767.9 457.1 768.4 453.9 768.9 451.7 769.4 435.4 769.7 429.2 769.9 419.5 770.4 407.5 771.1 391.5 771.2 341.5 770.5 337.5 770.5 330.5 770.8 323 772 323 772.3 330.5 772.35 339.5 773 343.5 773.1 391.5 773.6 407.5 774 419.5 774.2 427.7 774.4 428.3 774.9 435.5 775.4 437.1 775.6 427 775.8 419.5 776.1 407.5 776.45 391.5 776.5 307.5 776.7 304.5 777.3 304.5 777.5 307.5 777.55 325.5 778.3 328.5 778.4 391.5 778.9 407.5 779.3 419.5 779.5 431.1 779.9 444.6 780.4 437.3 780.9 455 781.4 455.4 781.9 459.5 782.4 461.6 782.9 462.2 783.4 464 783.9 462.7 784.4 465.5 784.9 465.6 785.4 465.8 785.9 465.9 786.4 466 786.9 467.2 787.4 467.5 787.9 467.5 788.4 467.5 788.9 467.5 789.4 467.5 789.9 467.5 790.4 467.5 790.9 467.5 791.4 467.5 791.9 467.5 792.4 467.5 792.4 467.5 791.9 467.5 791.4 467.5 790.9 467.5 790.4 467.5 789.9 467.5 789.4 467.5 788.9 467.5 788.4 467.5 787.9 467.5 787.4 467.5 786.9 467.8 786.4 469 785.9 469.1 785.4 469.2 784.9 469.4 784.4 469.5 783.9 470.4 783.4 470.6 782.9 471.6 782.4 472 781.9 476.5 781.4 475.1 780.9 480.4 780.4 492.9 779.9 498.3 779.4 506.3 778.9 561.1 778.4 569.7 777.9 572.2 777.4 571.4 777.2 574.8 777.1 584.5 777.05 638 776.15 638 776.1 584.5 776 569.2 775.9 563.6 775.4 557.5 774.9 513.2 774.4 501.2 773.9 509.6 773.4 537.6 772.9 562.2 772.4 558.9 771.9 565.3 771.5 566.3 771.4 571.5 771.3 633.5 770.5 633.5 770.45 571.5 770.4 564.5 769.9 544 769.4 506.8 768.9 481.2 768.4 480.8 767.9 477.3 767.4 475.2 766.9 475.7 766.4 476.1 765.9 473.6 765.4 475.6 764.9 473.3 764.4 472.8 763.9 469.3 763.4 469.3 762.9 469.2 762.4 469.2 761.9 469.1 761.4 469.1 760.9 467.8ZM797 467.2 797.5 465.9 798 465.9 798.5 465.8 799 465.8 799.5 465.7 800 465.7 800.5 463.6 801 461 801.5 457.3 802 460.4 802.5 458.6 803 461.5 803.5 458 804 456.5 804.5 459.1 805 452.3 805.5 438.2 805.8 429.2 806 419.5 806.5 407.5 807.2 391.5 807.3 341.5 806.6 337.5 806.6 330.5 806.9 323 808.1 323 808.4 330.5 808.45 339.5 809.1 343.5 809.2 391.5 809.7 407.5 810.1 419.5 810.3 427.7 810.5 430.1 811 445.9 811.5 429.9 811.7 427 811.9 419.5 812.2 407.5 812.55 391.5 812.6 307.5 812.8 304.5 813.4 304.5 813.6 307.5 813.65 325.5 814.4 328.5 814.5 391.5 815 407.5 815.4 419.5 815.6 431.1 816 439.5 816.5 442.3 817 459.8 817.5 454.9 818 459.1 818.5 461.2 819 463.1 819.5 462.3 820 463.2 820.5 465.5 821 465.6 821.5 465.8 822 465.9 822.5 466 823 467.2 823.5 467.5 824 467.5 824.5 467.5 825 467.5 825.5 467.5 826 467.5 826.5 467.5 827 467.5 827.5 467.5 828 467.5 828.5 467.5 828.5 467.5 828 467.5 827.5 467.5 827 467.5 826.5 467.5 826 467.5 825.5 467.5 825 467.5 824.5 467.5 824 467.5 823.5 467.5 823 467.8 822.5 469 822 469.1 821.5 469.2 821 469.4 820.5 469.5 820 472 819.5 471.9 819 472 818.5 473.5 818 476.1 817.5 476.8 817 478.8 816.5 487.3 816 498.8 815.5 497.2 815 567.8 814.5 568.2 814 576.6 813.5 574.9 813.3 574.8 813.2 584.5 813.15 638 812.25 638 812.2 584.5 812.1 569.2 812 564.7 811.5 554.7 811 513.6 810.5 494.8 810 502.8 809.5 533.4 809 560 808.5 563.1 808 561.8 807.6 566.3 807.5 571.5 807.4 633.5 806.6 633.5 806.55 571.5 806.5 564.5 806 541.3 805.5 505.4 805 479.9 804.5 479.9 804 477.5 803.5 478.7 803 475.3 802.5 475.3 802 476.2 801.5 477.2 801 473.3 800.5 474.2 800 469.3 799.5 469.3 799 469.2 798.5 469.2 798 469.1 797.5 469.1 797 467.8ZM813.3 467.2 813.8 465.9 814.3 465.9 814.8 465.8 815.3 465.8 815.8 465.7 816.3 465.7 816.8 463.1 817.3 462.3 817.8 460.1 818.3 460.1 818.8 459.2 819.3 460.7 819.8 457.9 820.3 459.1 820.8 455.4 821.3 455.6 821.8 439.4 822.1 429.2 822.3 419.5 822.8 407.5 823.5 391.5 823.6 341.5 822.9 337.5 822.9 330.5 823.2 323 824.4 323 824.7 330.5 824.75 339.5 825.4 343.5 825.5 391.5 826 407.5 826.4 419.5 826.6 427.7 826.8 432.7 827.3 435.2 827.8 442.5 828 427 828.2 419.5 828.5 407.5 828.85 391.5 828.9 307.5 829.1 304.5 829.7 304.5 829.9 307.5 829.95 325.5 830.7 328.5 830.8 391.5 831.3 407.5 831.7 419.5 831.9 431.1 832.3 443.1 832.8 436.9 833.3 459.5 833.8 456.2 834.3 458.2 834.8 460.9 835.3 463.5 835.8 464.3 836.3 463.3 836.8 465.5 837.3 465.6 837.8 465.8 838.3 465.9 838.8 466 839.3 467.2 839.8 467.5 840.3 467.5 840.8 467.5 841.3 467.5 841.8 467.5 842.3 467.5 842.8 467.5 843.3 467.5 843.8 467.5 844.3 467.5 844.8 467.5 844.8 467.5 844.3 467.5 843.8 467.5 843.3 467.5 842.8 467.5 842.3 467.5 841.8 467.5 841.3 467.5 840.8 467.5 840.3 467.5 839.8 467.5 839.3 467.8 838.8 469 838.3 469.1 837.8 469.2 837.3 469.4 836.8 469.5 836.3 471.3 835.8 472.1 835.3 472.5 834.8 475.2 834.3 478.3 833.8 480 833.3 481 832.8 491.8 832.3 492.3 831.8 502.7 831.3 567.7 830.8 572 830.3 574.4 829.8 575.7 829.6 574.8 829.5 584.5 829.45 638 828.55 638 828.5 584.5 828.4 569.2 828.3 565.1 827.8 556.7 827.3 509.5 826.8 508.2 826.3 498.3 825.8 535.3 825.3 559.8 824.8 557.9 824.3 563.9 823.9 566.3 823.8 571.5 823.7 633.5 822.9 633.5 822.85 571.5 822.8 564.5 822.3 543.4 821.8 512.8 821.3 483.3 820.8 477.5 820.3 475.5 819.8 481.7 819.3 474.8 818.8 475.4 818.3 475.1 817.8 477.9 817.3 476.1 816.8 471.1 816.3 469.3 815.8 469.3 815.3 469.2 814.8 469.2 814.3 469.1 813.8 469.1 813.3 467.8ZM849.4 467.2 849.9 465.9 850.4 465.9 850.9 465.8 851.4 465.8 851.9 465.7 852.4 465.7 852.9 463.5 853.4 459.5 853.9 458 854.4 456.8 854.9 460.6 855.4 458.6 855.9 458.5 856.4 453.2 856.9 452.6 857.4 456.2 857.9 442.7 858.2 429.2 858.4 419.5 858.9 407.5 859.6 391.5 859.7 341.5 859 337.5 859 330.5 859.3 323 860.5 323 860.8 330.5 860.85 339.5 861.5 343.5 861.6 391.5 862.1 407.5 862.5 419.5 862.7 427.7 862.9 426.7 863.4 428.8 863.9 432.4 864.1 427 864.3 419.5 864.6 407.5 864.95 391.5 865 307.5 865.2 304.5 865.8 304.5 866 307.5 866.05 325.5 866.8 328.5 866.9 391.5 867.4 407.5 867.8 419.5 868 431.1 868.4 446.8 868.9 450.9 869.4 458.5 869.9 454.5 870.4 456 870.9 461.6 871.4 462.5 871.9 462.3 872.4 464 872.9 465.5 873.4 465.6 873.9 465.8 874.4 465.9 874.9 466 875.4 467.2 875.9 467.5 876.4 467.5 876.9 467.5 877.4 467.5 877.9 467.5 878.4 467.5 878.9 467.5 879.4 467.5 879.9 467.5 880.4 467.5 880.9 467.5 880.9 467.5 880.4 467.5 879.9 467.5 879.4 467.5 878.9 467.5 878.4 467.5 877.9 467.5 877.4 467.5 876.9 467.5 876.4 467.5 875.9 467.5 875.4 467.8 874.9 469 874.4 469.1 873.9 469.2 873.4 469.4 872.9 469.5 872.4 471.5 871.9 471.4 871.4 471.5 870.9 472.2 870.4 478.3 869.9 476.7 869.4 479.8 868.9 489.3 868.4 489.5 867.9 500.1 867.4 559.4 866.9 574.8 866.4 576.2 865.9 579.4 865.7 574.8 865.6 584.5 865.55 638 864.65 638 864.6 584.5 864.5 569.2 864.4 564.2 863.9 557.1 863.4 512.1 862.9 509.4 862.4 514.1 861.9 537.7 861.4 561.3 860.9 563.3 860.4 562.4 860 566.3 859.9 571.5 859.8 633.5 859 633.5 858.95 571.5 858.9 564.5 858.4 539.5 857.9 497 857.4 486.9 856.9 476.5 856.4 479 855.9 475.2 855.4 474.9 854.9 473.6 854.4 473.4 853.9 475.4 853.4 473.5 852.9 473.9 852.4 469.3 851.9 469.3 851.4 469.2 850.9 469.2 850.4 469.1 849.9 469.1 849.4 467.8Z" fill="#4e9a06"/>
<path d="M446 467.50 447 468.19 448 467.69 449 467.94 450 467.33 451 466.66 452 467.41 453 467.38 454 467.78 455 468.37 456 467.43 457 467.31 458 467.18 459 466.73 460 467.77 461 467.96 462 467.76 463 468.06 464 467.05 465 466.86 466 467.40 467 467.20 468 468.06 469 468.20 470 467.37 471 467.52 472 466.92 473 466.86 474 467.89 475 467.72 476 467.99 477 467.99 478 466.88 479 467.12 480 467.22 481 467.22 482 468.27 483 467.93 484 467.51 485 467.56 486 466.68 487 467.12 488 467.80 489 467.61 490 468.24 491 467.74 492 466.91 493 467.29 494 466.96 495 467.43 496 468.30 497 467.71 498 467.75 499 467.40 500 466.60 501 467.38 502 467.58 503 467.71 504 468.36 505 467.47 506 467.11 507 467.26 508 466.80 509 467.71 510 468.13 511 467.67 512 467.95 513 467.13 514 466.73 515 467.48 516 467.35 517 467.96 518 468.28 519 467.30 520 467.36 521 467.05 522 466.82 523 467.92 524 467.87 525 467.83 526 467.98 527 466.89 528 466.99 529 467.38 530 467.26 531 468.22 532 468.04 533 467.34 534 467.50 535 466.78 536 467.04 537 467.94 538 467.68 539 468.09 540 467.81 541 466.81 542 467.22 543 467.14 544 467.38 545 468.35 546 467.78 547 467.55 548 467.45 549 466.61 550 467.32 551 467.77 552 467.67 553 468.29 554 467.53 555 466.94 556 467.30 557 466.92 558 467.64 559 468.27 560 467.64 561 467.79 562 467.22 563 466.64 564 467.51 565 467.52 566 467.85 567 468.32 568 467.29 569 467.18 570 467.17 571 466.84 572 467.91 573 468.04 574 467.70 575 467.92 576 466.94 577 466.85 578 467.52 579 467.35 580 468.13 581 468.14 582 467.22 583 467.40 584 466.92 585 466.97 586 468.03 587 467.79 588 467.92 589 467.85 590 466.77 591 467.12 592 467.33 593 467.37 594 468.34 595 467.87 596 467.36 597 467.45 598 466.68 599 467.24 600 467.95 601 467.68 602 468.17 603 467.60 604 466.80 605 467.29 606 467.08 607 467.57 608 468.36 609 467.65 610 467.60 611 467.30 612 466.61 613 467.50 614 467.72 615 467.77 616 468.29 617 467.32 618 467.00 619 467.27 620 466.92 621 467.85 622 468.19 623 467.60 624 467.80 625 467.02 626 466.74 627 467.60 628 467.49 629 468.01 630 468.21 631 467.16 632 467.25 633 467.07 634 466.94 635 468.06 636 467.93 637 467.75 638 467.84 639 466.78 640 467.00 641 467.51 642 467.40 643 468.27 644 467.97 645 467.19 646 467.40 647 466.80 648 467.16 649 468.08 650 467.73 651 468.00 652 467.67 653 466.71 654 467.24 655 467.28 656 467.51 657 468.39 658 467.70 659 467.40 660 467.35 661 466.64 662 467.44 663 467.91 664 467.71 665 468.21 666 467.39 667 466.83 668 467.32 669 467.05 670 467.77 671 468.31 672 467.55 673 467.64 674 467.12 675 466.67 676 467.64 677 467.66 678 467.89 679 468.23 680 467.15 681 467.08 682 467.21 683 466.97 684 468.04 685 468.07 686 467.60 687 467.77 688 466.85 689 466.88 690 467.65 691 467.49 692 468.16 693 468.05 694 467.08 695 467.30 696 466.96 697 467.10 698 468.16 699 467.82 700 467.82 701 467.70 702 466.68 703 467.15 704 467.47 705 467.49 706 468.36 707 467.77 708 467.21 709 467.36 710 466.73 711 467.37 712 468.08 713 467.70 714 468.07 715 467.46 716 466.71 717 467.33 718 467.22 719 467.69 720 468.38 721 467.55 722 467.45 723 467.22 724 466.65 725 467.63 726 467.85 727 467.78 728 468.19 729 467.18 730 466.92 731 467.32 732 467.06 733 467.97 734 468.21 735 467.49 736 467.66 737 466.95 738 466.79 739 467.74 740 467.62 741 468.02 742 468.11 743 467.01 744 467.17 745 467.12 746 467.08 747 468.18 748 467.94 749 467.64 750 467.69 751 466.71 752 467.05 753 467.65 754 467.52 755 468.27 756 467.86 757 467.05 758 467.33 759 466.86 760 467.30 761 468.20 762 467.74 763 467.89 764 467.52 765 466.64 766 467.30 767 467.42 768 467.63 769 468.40 770 467.59 771 467.25 772 467.28 773 466.70 774 467.58 775 468.03 776 467.71 777 468.09 778 467.24 779 466.77 780 467.39 781 467.20 782 467.89 783 468.31 784 467.43 785 467.50 786 467.06 787 466.73 788 467.78 789 467.78 790 467.88 791 468.11 792 467.00 793 467.02 794 467.28 795 467.12 796 468.15 797 468.07 798 467.48 799 467.63 800 466.79 801 466.95 802 467.80 803 467.60 804 468.14 805 467.94 806 466.93 807 467.25 808 467.03 809 467.24 810 468.27 811 467.81 812 467.70 813 467.56 814 466.63 815 467.22 816 467.62 817 467.60 818 468.35 819 467.65 820 467.06 821 467.31 822 466.81 823 467.51 824 468.19 825 467.69 826 467.94 827 467.32 828 466.66 829 467.41 830 467.37 831 467.79 832 468.37 833 467.42 834 467.31 835 467.17 836 466.73 837 467.78 838 467.96 839 467.76 840 468.06 841 467.04 842 466.87 843 467.40 844 467.21 845 468.07 846 468.19 847 467.37 848 467.52 849 466.91 850 466.87 851 467.89 852 467.72 853 467.99 854 467.98 855 466.88 856 467.13 857 467.21 858 467.23 859 468.28 860 467.92 861 467.51 862 467.56 863 466.68 864 467.13 865 467.80 866 467.62 867 468.24 868 467.73 869 466.91 870 467.29 871 466.96 872 467.44 873 468.30 874 467.71 875 467.75 876 467.39 877 466.60 878 467.39 879 467.57 880 467.72 881 468.36 882 467.46 883 467.12 884 467.26 885 466.80" fill="none" stroke="#4e9a06" stroke-width="1"/>
<path d="M289 467.500H1168.500" stroke="#4e9a06" stroke-width="1"/>
<path d="M280.500 287.500H1176.500V642.500H280.500ZM275.5 633.5H280M275.5 619.5H280M272.5 605.5H280M275.5 592.5H280M275.5 578.5H280M275.5 564.5H280M275.5 550.5H280M272.5 536.5H280M275.5 522.5H280M275.5 509.5H280M275.5 495.5H280M275.5 481.5H280M272.5 467.5H280M275.5 453.5H280M275.5 439.5H280M275.5 425.5H280M275.5 411.5H280M272.5 397.5H280M275.5 384.5H280M275.5 370.5H280M275.5 356.5H280M275.5 342.5H280M272.5 328.5H280M275.5 314.5H280M275.5 300.5H280M289.5 643V650.0M314.5 643V647.0M340.5 643V647.0M365.5 643V647.0M391.5 643V650.0M416.5 643V647.0M442.5 643V647.0M467.5 643V647.0M493.5 643V650.0M518.5 643V647.0M544.5 643V647.0M570.5 643V647.0M595.5 643V650.0M621.5 643V647.0M646.5 643V647.0M672.5 643V647.0M697.5 643V650.0M723.5 643V647.0M748.5 643V647.0M774.5 643V647.0M800.5 643V650.0M825.5 643V647.0M851.5 643V647.0M876.5 643V647.0M902.5 643V650.0M927.5 643V647.0M953.5 643V647.0M978.5 643V647.0M1004.5 643V650.0M1029.5 643V647.0M1055.5 643V647.0M1081.5 643V647.0M1106.5 643V650.0M1132.5 643V647.0M1157.5 643V647.0" fill="none" stroke="#000" stroke-width="1" shape-rendering="crispEdges"/>
<g font-size="12" fill="#222">
<text x="269" y="332.8" text-anchor="end">20</text>
<text x="269" y="401.8" text-anchor="end">10</text>
<text x="269" y="471.8" text-anchor="end">0</text>
<text x="269" y="540.8" text-anchor="end">-10</text>
<text x="269" y="609.8" text-anchor="end">-20</text>
<text x="289.5" y="666.500" text-anchor="middle">0</text>
<text x="391.5" y="666.500" text-anchor="middle">2</text>
<text x="493.5" y="666.500" text-anchor="middle">4</text>
<text x="595.5" y="666.500" text-anchor="middle">6</text>
<text x="697.5" y="666.500" text-anchor="middle">8</text>
<text x="800.5" y="666.500" text-anchor="middle">10</text>
<text x="902.5" y="666.500" text-anchor="middle">12</text>
<text x="1004.5" y="666.500" text-anchor="middle">14</text>
<text x="1106.5" y="666.500" text-anchor="middle">16</text>
<text x="727.500" y="685" text-anchor="middle" font-size="13.330">时间 (s)</text>
<text transform="translate(246.600 537.600) rotate(-90)" font-size="13.330" textLength="143" lengthAdjust="spacing">钢轨垂向加速度 (m/s^2)</text>
<text x="968.500" y="317" textLength="192" lengthAdjust="spacingAndGlyphs">MODEL-4J-1T10-ID418: 250.800m</text>
</g>
<path d="M948 312.500H965" stroke="#4e9a06" stroke-width="1"/>
</svg>
  </div>
  <div class="abs" id="wm" style="left:0;top:0;width:1247px;height:749px;z-index:5;pointer-events:none;color:#000">
<span class="abs" id="wmC" style="left:991px;top:671.500px;font-size:42px;line-height:50px;font-weight:bold;font-style:italic;-webkit-text-stroke:4.400px #000;transform-origin:0 0;transform:scaleX(.97)">C</span>
<span class="abs" id="wmJ" style="left:1030.500px;top:674px;font-size:22px;line-height:24px;font-weight:bold;font-style:italic;-webkit-text-stroke:2.600px #000;transform-origin:0 0;transform:scaleX(.8)">J</span>
<span class="abs" id="wmD" style="left:1024px;top:690.500px;font-size:26.500px;line-height:26px;font-weight:bold;font-style:italic;-webkit-text-stroke:2.200px #000;transform-origin:0 0;transform:scaleX(1.1)">D</span>
<span class="abs" id="wmS" style="left:1051px;top:679.500px;font-size:11.500px;line-height:14px;white-space:nowrap;transform-origin:0 0;transform:scaleX(.85)">SINCE 2015</span>
<span class="abs" id="wmW" style="left:1049.500px;top:687px;font-size:28px;line-height:34px;font-weight:bold;font-style:italic;white-space:nowrap;letter-spacing:1px;-webkit-text-stroke:1.300px #000;transform-origin:0 0;transform:scaleX(.845)">www.jdcui.com</span>
</div>
</div>
</body>
</html>
